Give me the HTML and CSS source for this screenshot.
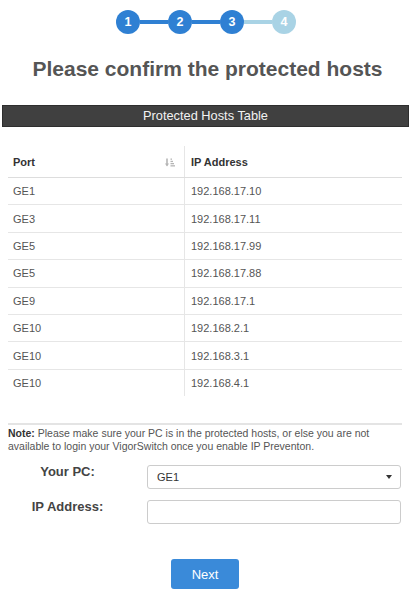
FILE: index.html
```html
<!DOCTYPE html>
<html>
<head>
<meta charset="utf-8">
<link rel="stylesheet" href="styles.css">
</head>
<body>
<div class="page">
  <div class="stepper">
    <div class="step done">1</div>
    <div class="bar done"></div>
    <div class="step done">2</div>
    <div class="bar done"></div>
    <div class="step done">3</div>
    <div class="bar todo"></div>
    <div class="step todo">4</div>
  </div>
  <h1 class="title">Please confirm the protected hosts</h1>

  <div class="panel-head">Protected Hosts Table</div>

  <table class="hosts">
    <thead>
      <tr>
        <th class="c1"><span>Port</span>
          <svg class="sort" width="10" height="9" viewBox="0 0 10 9">
            <path d="M2 0.5V7.5" stroke="#b5b5b5" stroke-width="1.6" fill="none"/>
            <path d="M0 5.5L2 8.5L4 5.5Z" fill="#b5b5b5"/>
            <rect x="5.5" y="0.5" width="1.5" height="1.3" fill="#b5b5b5"/>
            <rect x="5.5" y="2.8" width="2.5" height="1.3" fill="#b5b5b5"/>
            <rect x="5.5" y="5" width="3.5" height="1.3" fill="#b5b5b5"/>
            <rect x="5.5" y="7.2" width="4.5" height="1.3" fill="#b5b5b5"/>
          </svg>
        </th>
        <th class="c2">IP Address</th>
      </tr>
    </thead>
    <tbody>
      <tr><td>GE1</td><td>192.168.17.10</td></tr>
      <tr><td>GE3</td><td>192.168.17.11</td></tr>
      <tr><td>GE5</td><td>192.168.17.99</td></tr>
      <tr><td>GE5</td><td>192.168.17.88</td></tr>
      <tr><td>GE9</td><td>192.168.17.1</td></tr>
      <tr><td>GE10</td><td>192.168.2.1</td></tr>
      <tr><td>GE10</td><td>192.168.3.1</td></tr>
      <tr class="last"><td>GE10</td><td>192.168.4.1</td></tr>
    </tbody>
  </table>

  <div class="note"><b>Note:</b> Please make sure your PC is in the protected hosts, or else you are not<br>available to login your VigorSwitch once you enable IP Preventon.</div>

  <div class="form">
    <div class="row">
      <label class="lbl">Your PC:</label>
      <div class="field select"><span>GE1</span><span class="caret"></span></div>
    </div>
    <div class="row">
      <label class="lbl">IP Address:</label>
      <div class="field"></div>
    </div>
  </div>

  <div class="actions"><button class="btn">Next</button></div>
</div>
</body>
</html>
```

FILE: styles.css
```css
html, body {
  margin: 0;
  padding: 0;
  background: #fff;
}
body {
  font-family: "Liberation Sans", Arial, sans-serif;
  color: #333;
}
.page {
  width: 415px;
}
.stepper {
  display: flex;
  align-items: center;
  justify-content: center;
  padding-top: 10px;
  padding-right: 3px;
}
.step {
  width: 24px;
  height: 24px;
  border-radius: 50%;
  color: #fff;
  font-weight: bold;
  font-size: 12.5px;
  line-height: 24px;
  text-align: center;
}
.step.done { background: #2f80d3; }
.step.todo { background: #a9d3e5; }
.bar {
  width: 28px;
  height: 4px;
}
.bar.done { background: #2f80d3; }
.bar.todo { background: #a9d3e5; }
.title {
  margin: 23px 0 0;
  text-align: center;
  font-size: 21px;
  line-height: 24px;
  font-weight: bold;
  color: #555;
}
.panel-head {
  margin: 24px 6px 0 2px;
  height: 22px;
  line-height: 20px;
  background: #404040;
  border: 1px solid #2e2e2e;
  box-sizing: border-box;
  color: #f2f2f2;
  font-size: 12.8px;
  text-align: center;
}
.hosts {
  margin: 19px 13px 0 8px;
  width: 394px;
  border-collapse: collapse;
  font-size: 11px;
  color: #555;
}
.hosts th {
  text-align: left;
  font-weight: bold;
  color: #333;
  height: 31px;
  padding: 0 5px;
  border-bottom: 1px solid #ddd;
  font-size: 11px;
}
.hosts th.c1 {
  width: 166px;
  position: relative;
}
.hosts th.c1 .sort {
  position: absolute;
  right: 9px;
  top: 12px;
}
.hosts th.c2, .hosts td + td {
  border-left: 1px solid #e6e6e6;
  padding-left: 6px;
}
.hosts td {
  height: 26.4px;
  padding: 0 5px;
  border-bottom: 1px solid #e6e6e6;
}
.hosts tr.last td {
  border-bottom: none;
}
.note {
  margin: 27px 13px 0 8px;
  padding-top: 2px;
  border-top: 2px solid #e4e4e4;
  font-size: 10.5px;
  line-height: 12.5px;
  color: #555;
}
.note b { color: #333; }
.form {
  margin-top: 13px;
  display: flex;
  flex-direction: column;
  gap: 11px;
}
.row {
  display: flex;
  align-items: flex-start;
}
.lbl {
  width: 135px;
  text-align: center;
  font-weight: bold;
  font-size: 13px;
  color: #444;
  margin-top: -1px;
  margin-right: 12px;
}
.field {
  width: 254px;
  height: 24px;
  border: 1px solid #ccc;
  border-radius: 3px;
  box-sizing: border-box;
  display: flex;
  align-items: center;
  justify-content: space-between;
  padding: 0 9px;
  font-size: 11px;
  color: #333;
}
.caret {
  width: 0;
  height: 0;
  border-left: 3.5px solid transparent;
  border-right: 3.5px solid transparent;
  border-top: 4px solid #333;
  margin-right: -1px;
}
.actions {
  display: flex;
  justify-content: center;
  margin-top: 35px;
  padding-right: 5px;
}
.btn {
  width: 68px;
  height: 30px;
  border: none;
  border-radius: 3px;
  background: #3a8ad9;
  color: #fff;
  font-family: "Liberation Sans", Arial, sans-serif;
  font-size: 13px;
  padding: 0;
}
```
